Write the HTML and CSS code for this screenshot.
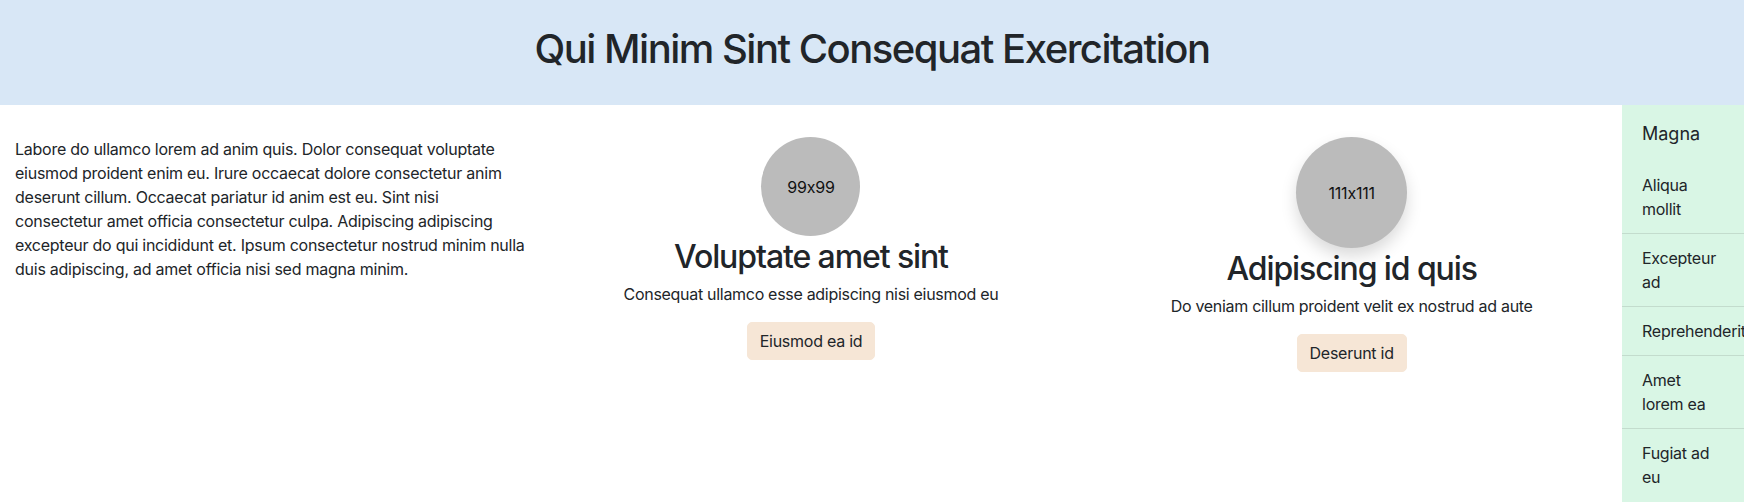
FILE: index.html
```html
<!DOCTYPE html>
<html lang="en">
<head>
<meta charset="utf-8">
<title>Qui Minim Sint Consequat Exercitation</title>
<link rel="stylesheet" href="styles.css">
</head>
<body>
<header class="hero">
  <h1 class="hero-title">Qui Minim Sint Consequat Exercitation</h1>
</header>
<div class="layout">
  <main class="content">
    <section class="intro">
      <p>Labore do ullamco lorem ad anim quis. Dolor consequat voluptate eiusmod proident enim eu. Irure occaecat dolore consectetur anim deserunt cillum. Occaecat pariatur id anim est eu. Sint nisi consectetur amet officia consectetur culpa. Adipiscing adipiscing excepteur do qui incididunt et. Ipsum consectetur nostrud minim nulla duis adipiscing, ad amet officia nisi sed magna minim.</p>
    </section>
    <section class="feature">
      <div class="avatar avatar-sm">99x99</div>
      <h2 class="feature-title">Voluptate amet sint</h2>
      <p class="feature-text">Consequat ullamco esse adipiscing nisi eiusmod eu</p>
      <button class="btn" type="button">Eiusmod ea id</button>
    </section>
    <section class="feature">
      <div class="avatar avatar-lg">111x111</div>
      <h2 class="feature-title">Adipiscing id quis</h2>
      <p class="feature-text">Do veniam cillum proident velit ex nostrud ad aute</p>
      <button class="btn" type="button">Deserunt id</button>
    </section>
  </main>
  <aside class="sidebar">
    <h3 class="sidebar-title">Magna</h3>
    <ul class="sidebar-list">
      <li class="sidebar-item">Aliqua mollit</li>
      <li class="sidebar-item">Excepteur ad</li>
      <li class="sidebar-item">Reprehenderit</li>
      <li class="sidebar-item">Amet lorem ea</li>
      <li class="sidebar-item">Fugiat ad eu</li>
    </ul>
  </aside>
</div>
</body>
</html>
```

FILE: styles.css
```css
* { box-sizing: border-box; }

html, body {
  margin: 0;
  padding: 0;
}

body {
  font-family: Inter, "Noto Sans", "Liberation Sans", sans-serif;
  font-size: 16px;
  line-height: 24px;
  color: #212529;
  background: #ffffff;
  overflow: hidden;
  font-feature-settings: "calt" 0;
}

.hero {
  background: #d8e7f6;
  padding: 25px 0 32px;
  text-align: center;
}

.hero-title {
  margin: 0;
  font-size: 40px;
  line-height: 48px;
  font-weight: 500;
  letter-spacing: -1.5px;
}

.layout {
  display: flex;
  min-height: 397px;
}

.content {
  flex: 1;
  display: grid;
  grid-template-columns: 1fr 1fr 1fr;
  padding-top: 32px;
}

.intro {
  padding: 0 15px;
}

.intro p {
  margin: 0;
  letter-spacing: -0.25px;
}

.feature {
  display: flex;
  flex-direction: column;
  align-items: center;
  text-align: center;
}

.avatar {
  border-radius: 50%;
  background: #bbbbbb;
  display: flex;
  align-items: center;
  justify-content: center;
  color: #111;
  font-size: 16px;
  letter-spacing: -0.2px;
}

.avatar-sm {
  width: 99px;
  height: 99px;
}

.avatar-lg {
  width: 111px;
  height: 111px;
  box-shadow: 0 8px 16px rgba(0, 0, 0, 0.15);
}

.feature-title {
  margin: 2px 0 6px;
  font-size: 32px;
  line-height: 38px;
  font-weight: 500;
  letter-spacing: -1.1px;
}

.feature-text {
  margin: 0 0 16px;
  letter-spacing: -0.3px;
}

.btn {
  font-family: inherit;
  font-feature-settings: "calt" 0;
  font-size: 16px;
  line-height: 24px;
  color: #212529;
  background: #f6e6d6;
  border: 1px solid #f6e6d6;
  border-radius: 5px;
  padding: 6px 12px;
  letter-spacing: -0.25px;
}

.sidebar {
  width: 122px;
  flex: none;
  background: #d9f6e5;
}

.sidebar-title {
  margin: 0;
  padding: 17px 20px 15px;
  font-size: 18px;
  line-height: 24px;
  font-weight: 400;
}

.sidebar-list {
  list-style: none;
  margin: 0;
  padding: 0;
}

.sidebar-item {
  padding: 12px 20px;
  border-bottom: 1px solid #c3dccd;
  letter-spacing: -0.25px;
}

.sidebar-item:last-child {
  border-bottom: 0;
}
```
